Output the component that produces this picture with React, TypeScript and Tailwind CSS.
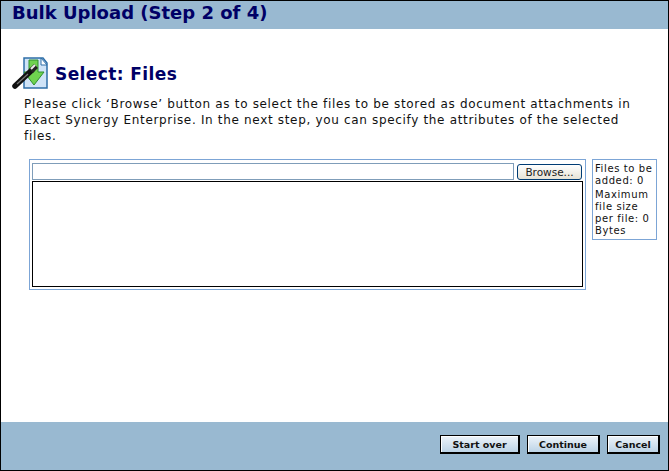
export default function App() {
  const font = { fontFamily: '"DejaVu Sans", sans-serif' };
  return (
    <div className="w-[669px] h-[471px] flex flex-col border border-black bg-white overflow-hidden font-['DejaVu_Sans',sans-serif]" style={font}>
      <div className="h-[28px] bg-[#99b9d1] pl-[11px] text-[18px] leading-[24px] font-bold text-[#000066] whitespace-nowrap shrink-0">
        Bulk Upload (Step 2 of 4)
      </div>
      <div className="flex-1 flex flex-col">
        <div className="flex items-center h-[37px] mt-[26px] pl-[11px]">
          <svg width="36" height="36" viewBox="0 0 36 36" className="shrink-0">
            <path d="M12 2H31L35 7V32H12Z" fill="#cfe3f7" stroke="#2f6fa8" strokeWidth="1.5" />
            <path d="M29 2V9H35Z" fill="#ffffff" stroke="#2f6fa8" strokeWidth="1" />
            <path d="M17 4H26V16H32L22 29L12 16H17Z" fill="#6fd24f" stroke="#2f8f2f" strokeWidth="1" />
            <path d="M3 30L20 14" stroke="#111111" strokeWidth="5.5" strokeLinecap="round" />
            <path d="M19 15L24 10" stroke="#222222" strokeWidth="5.5" />
            <path d="M19 13L23 9" stroke="#eeeeee" strokeWidth="2" />
            <path d="M5 28L16 18" stroke="#777777" strokeWidth="1.2" />
          </svg>
          <div className="ml-[7px] text-[17px] tracking-[0.4px] font-bold text-[#000066] leading-[24px]">Select: Files</div>
        </div>
        <p className="mt-[4px] ml-[23px] w-[625px] text-[12px] tracking-[0.67px] leading-[16px] text-[#111111]">
          Please click ‘Browse’ button as to select the files to be stored as document attachments in Exact Synergy Enterprise. In the next step, you can specify the attributes of the selected files.
        </p>
        <div className="flex items-start mt-[15px] ml-[28px]">
          <div className="w-[557px] h-[131px] border border-[#7ca5d6] pl-[2px] pt-[3px] pr-[2px] flex flex-col">
            <div className="flex items-start h-[18px]">
              <div className="w-[482px] h-[17px] border border-[#7f9db9] bg-white" />
              <button className="ml-[3px] mt-[1px] w-[65px] h-[16px] rounded-[3px] border border-[#003c74] bg-gradient-to-b from-white to-[#e6e3d6] text-[10.5px] leading-[14px] text-[#222222]">
                Browse...
              </button>
            </div>
            <div className="w-[551px] h-[106px] border border-black bg-white" />
          </div>
          <div className="ml-[6px] w-[65px] h-[81px] border border-[#7ca5d6] pl-[2px] pt-[3px] text-[10px] tracking-[0.6px] leading-[12px] text-[#111111]">
            <div>Files to be added: 0</div>
            <div className="mt-[2px]">Maximum file size per file: 0 Bytes</div>
          </div>
        </div>
      </div>
      <div className="h-[48px] bg-[#99b9d1] flex items-start justify-end gap-[7px] pt-[13px] pr-[8px] shrink-0">
        {[
          ["Start over", "w-[80px]"],
          ["Continue", "w-[73px]"],
          ["Cancel", "w-[53px]"],
        ].map(([label, w]) => (
          <button
            key={label}
            className={`${w} h-[19px] border border-black border-r-2 border-b-2 bg-gradient-to-b from-[#eef4fa] to-[#bcd3e6] text-[9.5px] leading-[15px] font-bold text-[#111111] shadow-[inset_1px_1px_0_#ffffff]`}
          >
            {label}
          </button>
        ))}
      </div>
    </div>
  );
}
